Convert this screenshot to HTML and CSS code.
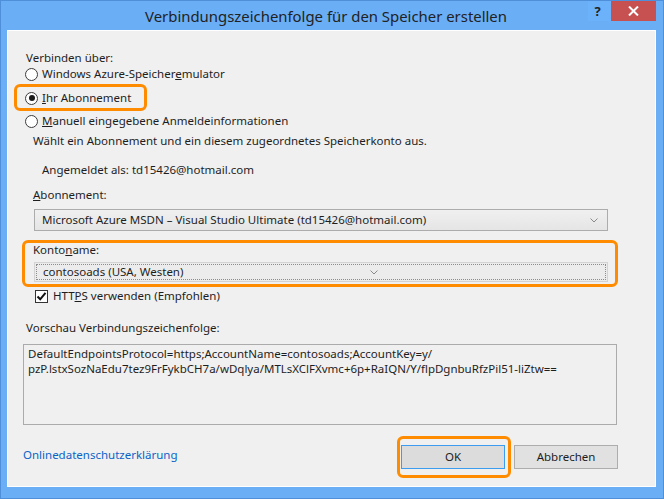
FILE: index.html
```html
<!DOCTYPE html>
<html lang="de">
<head>
<meta charset="utf-8">
<title>Verbindungszeichenfolge</title>
<link rel="stylesheet" href="styles.css">
</head>
<body>
<div class="window">
  <div class="titlebar">
    <span class="title">Verbindungszeichenfolge für den Speicher erstellen</span>
    <div class="caption-btns">
      <span class="help">?</span>
      <span class="close">
        <svg width="11" height="10" viewBox="0 0 11 10"><path d="M1 0.5 L10 9.5 M10 0.5 L1 9.5" stroke="#fff" stroke-width="2"/></svg>
      </span>
    </div>
  </div>
  <div class="content">
    <div class="label l-verbinden">Verbinden über:</div>
    <div class="radio-row r1"><span class="radio"></span><span>Windows Azure-Speicher<u>e</u>mulator</span></div>
    <div class="radio-row r2"><span class="radio checked"></span><span><u>I</u>hr Abonnement</span></div>
    <div class="radio-row r3"><span class="radio"></span><span><u>M</u>anuell eingegebene Anmeldeinformationen</span></div>
    <div class="label l-waehlt">Wählt ein Abonnement und ein diesem zugeordnetes Speicherkonto aus.</div>
    <div class="label l-angemeldet">Angemeldet als: td15426@hotmail.com</div>
    <div class="label l-abo"><u>A</u>bonnement:</div>
    <div class="select sel-abo">
      <span>Microsoft Azure MSDN – Visual Studio Ultimate (td15426@hotmail.com)</span>
      <svg class="chev" width="8" height="5" viewBox="0 0 8 5"><path d="M0.5 0.5 L4 4 L7.5 0.5" fill="none" stroke="#8a8a8a" stroke-width="1"/></svg>
    </div>
    <div class="label l-konto">Konto<u>n</u>ame:</div>
    <div class="select sel-konto">
      <div class="focus">
        <span class="konto-text">contosoads (USA, Westen)</span>
        <svg class="chev2" width="8" height="5" viewBox="0 0 8 5"><path d="M0.5 0.5 L4 4 L7.5 0.5" fill="none" stroke="#8a8a8a" stroke-width="1"/></svg>
      </div>
    </div>
    <div class="check-row">
      <span class="checkbox"><svg width="11" height="11" viewBox="0 0 11 11"><path d="M1.5 5.5 L4.2 8.3 L9.5 1.8" fill="none" stroke="#111" stroke-width="2"/></svg></span>
      <span>HTT<u>P</u>S verwenden (Empfohlen)</span>
    </div>
    <div class="label l-vorschau">Vorschau Verbindungszeichenfolge:</div>
    <div class="preview">DefaultEndpointsProtocol=https;AccountName=contosoads;AccountKey=y/
pzP.lstxSozNaEdu7tez9FrFykbCH7a/wDqlya/MTLsXClFXvmc+6p+RaIQN/Y/flpDgnbuRfzPil51-liZtw==</div>
    <div class="footer">
      <a class="link">Onlinedatenschutzerklärung</a>
      <div class="buttons">
        <span class="btn btn-ok">OK</span>
        <span class="btn">Abbrechen</span>
      </div>
    </div>
    <div class="hl hl-1"></div>
    <div class="hl hl-2"></div>
    <div class="hl hl-3"></div>
  </div>
</div>
</body>
</html>
```
FILE: styles.css
```css
html, body {
  margin: 0;
  padding: 0;
}
body {
  font-family: "Noto Sans", "Open Sans", sans-serif;
  font-size: 11.5px;
  color: #1e1e1e;
}
.window {
  width: 664px;
  height: 499px;
  box-sizing: border-box;
  border: 1px solid #4f8fd9;
  background: #6aaef6;
  display: flex;
  flex-direction: column;
}
.titlebar {
  height: 29px;
  position: relative;
  display: flex;
  align-items: center;
  justify-content: center;
  flex: none;
}
.title {
  font-size: 14.9px;
  color: #222;
  margin-left: -12px;
  margin-top: 1px;
}
.caption-btns {
  position: absolute;
  right: 7px;
  top: 0;
  display: flex;
  height: 20px;
}
.help {
  width: 23px;
  background: #6cb2fb;
  font-weight: bold;
  font-size: 13px;
  color: #222;
  display: flex;
  align-items: center;
  justify-content: center;
  padding-right: 4px;
  box-sizing: border-box;
}
.close {
  width: 45px;
  background: #c75050;
  display: flex;
  align-items: center;
  justify-content: center;
}
.content {
  position: relative;
  flex: 1;
  margin: 0 7px 11px 6px;
  border: 1px solid #ffffff;
  background: #f0f0f0;
  line-height: 16px;
}
.label {
  white-space: nowrap;
}
.l-verbinden {
  margin: 19px 0 0 18px;
}
.radio-row {
  display: flex;
  align-items: center;
  gap: 4px;
  margin-left: 17px;
  height: 16px;
}
.r1 { margin-top: 0; }
.r2 { margin-top: 8px; }
.r3 { margin-top: 7px; }
.radio {
  width: 11px;
  height: 11px;
  border: 1px solid #3c3c3c;
  border-radius: 50%;
  background: #fff;
  position: relative;
  flex: none;
}
.radio.checked::after {
  content: "";
  position: absolute;
  left: 2.5px;
  top: 2.5px;
  width: 6px;
  height: 6px;
  border-radius: 50%;
  background: #1a1a1a;
}
.l-waehlt {
  margin: 4px 0 0 25px;
}
.l-angemeldet {
  margin: 13px 0 0 34px;
}
.l-abo {
  margin: 9px 0 0 25px;
}
.select {
  margin: 6px 0 0 26px;
  height: 20px;
  border: 1px solid #acacac;
  background: #e9e9e9;
  display: flex;
  align-items: center;
  justify-content: space-between;
  padding: 0 9px 0 7px;
  box-sizing: content-box;
  width: 556px;
}
.sel-abo {
  background: linear-gradient(#f0f0f0, #e5e5e5);
}
.l-konto {
  margin: 11px 0 0 25px;
}
.sel-konto {
  margin-top: 4px;
  height: 18px;
  border-color: #d3d3d3;
  padding: 0;
  width: 572px;
  background: #ececec;
}
.focus {
  flex: 1;
  height: 14px;
  margin: 1px;
  border: 1px dotted #8c8c8c;
  display: flex;
  align-items: center;
  padding-left: 6px;
}
.konto-text {
  width: 327px;
}
.check-row {
  display: flex;
  align-items: center;
  gap: 5px;
  margin: 6px 0 0 27px;
  height: 16px;
}
.checkbox {
  width: 11px;
  height: 11px;
  border: 1px solid #333;
  background: #fff;
  display: flex;
  align-items: center;
  justify-content: center;
  flex: none;
}
.l-vorschau {
  margin: 16px 0 0 18px;
}
.preview {
  margin: 8px 0 0 15px;
  width: 583px;
  height: 78px;
  border: 1px solid #ababab;
  padding: 1px 5px 0 4px;
  white-space: pre;
  line-height: 15px;
  overflow: hidden;
  box-sizing: content-box;
}
.footer {
  display: flex;
  align-items: center;
  justify-content: space-between;
  margin: 20px 37px 0 15px;
}
.link {
  color: #0a64c8;
  cursor: pointer;
  margin-bottom: 4px;
}
.buttons {
  display: flex;
  gap: 9px;
}
.btn {
  width: 102px;
  height: 22px;
  border: 1px solid #adadad;
  background: #e1e1e1;
  display: flex;
  align-items: center;
  justify-content: center;
}
.btn-ok {
  border-color: #3c9cf0;
  background: #dcdcdc;
}
.hl {
  position: absolute;
  border: 3px solid #ff8c00;
  border-radius: 6px;
  box-sizing: border-box;
}
.hl-1 {
  left: 6px;
  top: 53px;
  width: 133px;
  height: 27px;
}
.hl-2 {
  left: 14px;
  top: 209px;
  width: 596px;
  height: 47px;
}
.hl-3 {
  left: 389px;
  top: 405px;
  width: 114px;
  height: 42px;
}
```
